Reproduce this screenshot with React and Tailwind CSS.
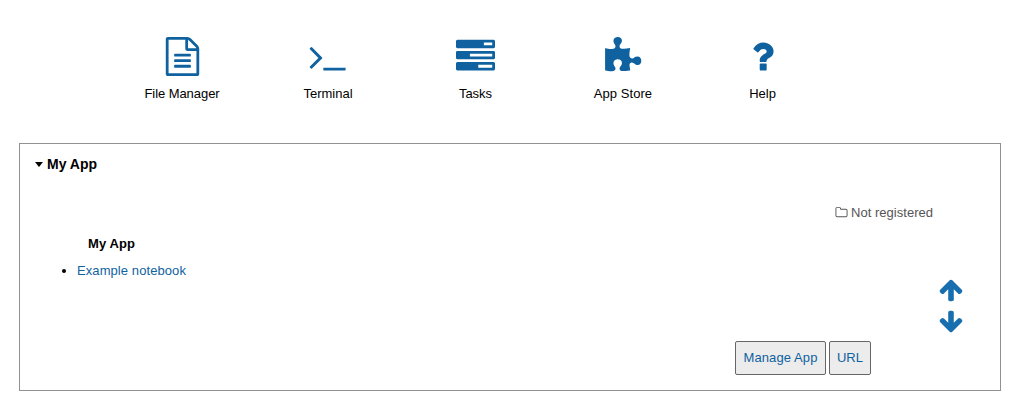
const paths = {
  file: "M1596 380q28 28 48 76t20 88v1152q0 40-28 68t-68 28h-1344q-40 0-68-28t-28-68v-1600q0-40 28-68t68-28h896q40 0 88 20t76 48zm-444-244v376h376q-10-29-22-41l-313-313q-12-12-41-22zm384 1528v-1024h-416q-40 0-68-28t-28-68v-416h-768v1536h1280zm-1024-864q0-14 9-23t23-9h704q14 0 23 9t9 23v64q0 14-9 23t-23 9h-704q-14 0-23-9t-9-23v-64zm736 224q14 0 23 9t9 23v64q0 14-9 23t-23 9h-704q-14 0-23-9t-9-23v-64q0-14 9-23t23-9h704zm0 256q14 0 23 9t9 23v64q0 14-9 23t-23 9h-704q-14 0-23-9t-9-23v-64q0-14 9-23t23-9h704z",
  terminal: "M649 983l-466 466q-10 10-23 10t-23-10l-50-50q-10-10-10-23t10-23l393-393-393-393q-10-10-10-23t10-23l50-50q10-10 23-10t23 10l466 466q10 10 10 23t-10 23zm1079 457v64q0 14-9 23t-23 9h-960q-14 0-23-9t-9-23v-64q0-14 9-23t23-9h960q14 0 23 9t9 23z",
  tasks: "M1024 1408h640v-128h-640v128zm-384-512h1024v-128h-1024v128zm640-512h384v-128h-384v128zm512 832v256q0 26-19 45t-45 19h-1664q-26 0-45-19t-19-45v-256q0-26 19-45t45-19h1664q26 0 45 19t19 45zm0-512v256q0 26-19 45t-45 19h-1664q-26 0-45-19t-19-45v-256q0-26 19-45t45-19h1664q26 0 45 19t19 45zm0-512v256q0 26-19 45t-45 19h-1664q-26 0-45-19t-19-45v-256q0-26 19-45t45-19h1664q26 0 45 19t19 45z",
  puzzle: "M1760 1098q0 81-44.5 135t-123.5 54q-41 0-77.500-17.500t-59-38-56.500-38-71-17.500q-110 0-110 124 0 39 16 115t15 115v5q-22 0-33 1-34 3-97.500 11.500t-115.500 13.500-98 5q-61 0-103-26.500t-42-83.500q0-37 17.500-71t38-56.500 38-59 17.500-77.500q0-79-54-123.500t-135-44.500q-84 0-143 45.500t-59 127.500q0 43 15 83t33.500 64.500 33.500 53 15 50.500q0 45-46 89-37 35-117 35-95 0-245-24-9-2-27.500-4t-27.500-4l-13-2q-1 0-3-1-2 0-2-1v-1024q2 1 17.500 3.500t34 5 21.500 3.500q150 24 245 24 80 0 117-35 46-44 46-89 0-22-15-50.500t-33.500-53-33.500-64.500-15-83q0-82 59-127.500t144-45.500q80 0 134 44.500t54 123.500q0 41-17.500 77.500t-38 59-38 56.500-17.500 71q0 57 42 83.500t103 26.500q64 0 180-15t163-17v2q-1 2-3.500 17.500t-5 34-3.500 21.500q-24 150-24 245 0 80 35 117 44 46 89 46 22 0 50.500-15t53-33.500 64.500-33.500 83-15q82 0 127.500 59t45.500 143z",
  question: "M1088 1256v240q0 16-12 28t-28 12h-240q-16 0-28-12t-12-28v-240q0-16 12-28t28-12h240q16 0 28 12t12 28zm316-600q0 54-15.500 101t-35 76.500-55 59.500-57.500 43.500-61 35.500q-41 23-68.500 65t-27.500 67q0 17-12 32.500t-28 15.500h-240q-15 0-25.500-18.500t-10.500-37.500v-45q0-83 65-156.500t143-108.500q59-27 84-56t25-76q0-42-46.500-74t-107.500-32q-65 0-108 29-35 25-107 115-13 16-31 16-12 0-25-8l-164-125q-13-10-15.500-25t5.500-28q160-266 464-266 80 0 161 31t146 83 106 127.500 41 158.500z",
  folder: "M1600 1312v-704q0-40-28-68t-68-28h-704q-40 0-68-28t-28-68v-64q0-40-28-68t-68-28h-320q-40 0-68 28t-28 68v960q0 40 28 68t68 28h1216q40 0 68-28t28-68zm128-704v704q0 92-66 158t-158 66h-1216q-92 0-158-66t-66-158v-960q0-92 66-158t158-66h320q92 0 158 66t66 158v32h672q92 0 158 66t66 158z",
  arrow: "M1675 971q0 51-37 90l-75 75q-38 38-91 38-54 0-90-38l-294-293v704q0 52-37.5 84.5t-90.5 32.5h-128q-53 0-90.500-32.500t-37.500-84.500v-704l-294 293q-36 38-90 38t-90-38l-75-75q-38-38-38-90 0-53 38-91l651-651q35-37 90-37 54 0 91 37l651 651q37 39 37 91z",
};

function Icon({ name, className }) {
  return (
    <svg viewBox="0 0 1792 1792" fill="currentColor" className={className} aria-hidden="true">
      <path d={paths[name]} />
    </svg>
  );
}

const shortcuts = [
  ["file", "File Manager", "size-[39px]", "tracking-[-0.06px]"],
  ["terminal", "Terminal", "mr-[2px] size-[39px]", ""],
  ["tasks", "Tasks", "size-[39px]", ""],
  ["puzzle", "App Store", "mr-[2px] size-[39px]", "tracking-[0.05px]"],
  ["question", "Help", "size-[39px]", ""],
];

export default function App() {
  return (
    <div className="h-[404px] w-[1027px] overflow-hidden bg-white font-['Liberation_Sans',Arial,sans-serif] text-[13px] leading-4 text-black">
      <nav className="grid h-[143px] grid-cols-[146px_146px_149px_146px_133px] pt-[37px] pl-[109px]">
        {shortcuts.map(([icon, label, iconClass, labelClass]) => (
          <a key={icon} className="flex flex-col items-center text-[#0f629f]">
            <Icon name={icon} className={iconClass} />
            <span className={`mt-[10px] whitespace-nowrap text-black ${labelClass}`}>{label}</span>
          </a>
        ))}
      </nav>
      <section className="ml-[19px] flex h-[248px] w-[982px] flex-col border border-[#919191]">
        <h2 className="mt-3 ml-[15px] flex h-4 items-center gap-1 text-[14px] font-bold">
          <svg viewBox="0 0 8 5" className="h-[5px] w-2" aria-hidden="true">
            <path d="M0 0h8L4 5z" />
          </svg>
          My App
        </h2>
        <div className="mt-[33px] mr-[67px] flex h-4 items-center justify-end gap-[3px] text-[#555]">
          <Icon name="folder" className="mb-px size-[13px]" />
          <span className="tracking-[0.02px]">Not registered</span>
        </div>
        <h3 className="mt-[15px] ml-[68px] font-bold tracking-[0.1px]">My App</h3>
        <ul className="mt-[11px] ml-[42px]">
          <li className="flex items-center gap-[11px]">
            <span className="size-1 rounded-full bg-black" />
            <a className="tracking-[0.08px] text-[#0f629f]">Example notebook</a>
          </li>
        </ul>
        <div className="-mt-[2px] mr-9 flex flex-col items-end gap-[6px] text-[#186fb0]">
          <Icon name="arrow" className="size-[26px]" />
          <Icon name="arrow" className="size-[26px] rotate-180" />
        </div>
        <div className="mt-[6px] mr-[129px] flex justify-end gap-[3px] text-[#0f629f]">
          <button className="h-[34px] w-[91px] rounded-[2px] border border-[#666] bg-[#ececec] tracking-[0.1px]">Manage App</button>
          <button className="h-[34px] w-[42px] rounded-[2px] border border-[#666] bg-[#ececec]">URL</button>
        </div>
      </section>
    </div>
  );
}
